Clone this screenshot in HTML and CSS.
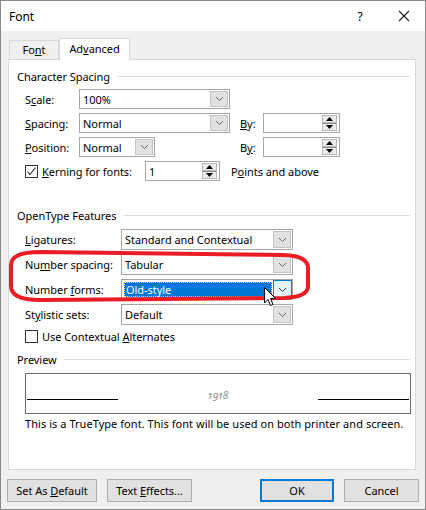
FILE: index.html
```html
<!DOCTYPE html>
<html>
<head>
<meta charset="utf-8">
<link rel="stylesheet" href="styles.css">
</head>
<body>
<div class="window">
  <div class="titlebar">
    <span class="title">Font</span>
    <span class="help">?</span>
    <span class="close"><svg width="12" height="12" viewBox="0 0 12 12"><path d="M1 1 L11 11 M11 1 L1 11" stroke="#1a1a1a" stroke-width="1.1" fill="none"/></svg></span>
  </div>
  <div class="client">
    <div class="tabs">
      <div class="tab">Fo<u>n</u>t</div>
      <div class="tab active">Ad<u>v</u>anced</div>
    </div>
    <div class="panel">
      <div class="group-title"><span>Character Spacing</span><i class="rule"></i></div>
      <div class="cs-rows">
        <div class="cs-row">
          <span class="lbl">S<u>c</u>ale:</span>
          <div class="combo w151"><span class="val">100%</span><span class="drop"><svg width="9" height="6" viewBox="0 0 9 6"><path d="M1 1 L4.5 4.5 L8 1" stroke="#666" fill="none"/></svg></span></div>
        </div>
        <div class="cs-row">
          <span class="lbl"><u>S</u>pacing:</span>
          <div class="combo w151"><span class="val">Normal</span><span class="drop"><svg width="9" height="6" viewBox="0 0 9 6"><path d="M1 1 L4.5 4.5 L8 1" stroke="#666" fill="none"/></svg></span></div>
          <span class="by"><u>B</u>y:</span>
          <div class="spin w77"><span class="val"></span><span class="arrows"><span class="up"><svg width="7" height="4" viewBox="0 0 7 4"><path d="M0 4 L3.5 0 L7 4 Z" fill="#000"/></svg></span><span class="dn"><svg width="7" height="4" viewBox="0 0 7 4"><path d="M0 0 L3.5 4 L7 0 Z" fill="#000"/></svg></span></span></div>
        </div>
        <div class="cs-row">
          <span class="lbl"><u>P</u>osition:</span>
          <div class="cell151"><div class="combo w76"><span class="val">Normal</span><span class="drop"><svg width="9" height="6" viewBox="0 0 9 6"><path d="M1 1 L4.5 4.5 L8 1" stroke="#666" fill="none"/></svg></span></div></div>
          <span class="by">B<u>y</u>:</span>
          <div class="spin w77"><span class="val"></span><span class="arrows"><span class="up"><svg width="7" height="4" viewBox="0 0 7 4"><path d="M0 4 L3.5 0 L7 4 Z" fill="#000"/></svg></span><span class="dn"><svg width="7" height="4" viewBox="0 0 7 4"><path d="M0 0 L3.5 4 L7 0 Z" fill="#000"/></svg></span></span></div>
        </div>
        <div class="cs-row kern">
          <span class="check-lbl"><span class="box checked"><svg width="11" height="11" viewBox="0 0 11 11"><path d="M1.5 5.5 L4 8.5 L9.5 1.5" stroke="#222" stroke-width="1.1" fill="none"/></svg></span><span><u>K</u>erning for fonts:</span></span>
          <div class="spin w75"><span class="val">1</span><span class="arrows"><span class="up"><svg width="7" height="4" viewBox="0 0 7 4"><path d="M0 4 L3.5 0 L7 4 Z" fill="#000"/></svg></span><span class="dn"><svg width="7" height="4" viewBox="0 0 7 4"><path d="M0 0 L3.5 4 L7 0 Z" fill="#000"/></svg></span></span></div>
          <span class="pts">P<u>o</u>ints and above</span>
        </div>
      </div>

      <div class="group-title ot"><span>OpenType Features</span><i class="rule"></i></div>
      <div class="ot-rows">
        <div class="ot-row">
          <span class="lbl2"><u>L</u>igatures:</span>
          <div class="combo w172"><span class="val">Standard and Contextual</span><span class="drop"><svg width="9" height="6" viewBox="0 0 9 6"><path d="M1 1 L4.5 4.5 L8 1" stroke="#666" fill="none"/></svg></span></div>
        </div>
        <div class="ot-row">
          <span class="lbl2">Nu<u>m</u>ber spacing:</span>
          <div class="combo w172"><span class="val">Tabular</span><span class="drop"><svg width="9" height="6" viewBox="0 0 9 6"><path d="M1 1 L4.5 4.5 L8 1" stroke="#666" fill="none"/></svg></span></div>
        </div>
        <div class="ot-row">
          <span class="lbl2">Number <u>f</u>orms:</span>
          <div class="combo w172 focused"><span class="val sel"><span class="seltext">Old-style</span></span><span class="drop"><svg width="9" height="6" viewBox="0 0 9 6"><path d="M1 1 L4.5 4.5 L8 1" stroke="#333" fill="none"/></svg></span></div>
        </div>
        <div class="ot-row">
          <span class="lbl2">St<u>y</u>listic sets:</span>
          <div class="combo w172"><span class="val">Default</span><span class="drop"><svg width="9" height="6" viewBox="0 0 9 6"><path d="M1 1 L4.5 4.5 L8 1" stroke="#666" fill="none"/></svg></span></div>
        </div>
      </div>
      <div class="check-row"><span class="box"></span><span>Use Contextual <u>A</u>lternates</span></div>

      <div class="group-title pv"><span>Preview</span><i class="rule"></i></div>
      <div class="preview">
        <i class="pline"></i>
        <span class="sample">1918</span>
        <i class="pline"></i>
      </div>
      <div class="desc">This is a TrueType font. This font will be used on both printer and screen.</div>
    </div>
    <div class="buttons">
      <button class="btn b1">Set As <u>D</u>efault</button>
      <button class="btn b2">Text <u>E</u>ffects...</button>
      <span class="spacer"></span>
      <button class="btn ok">OK</button>
      <button class="btn cancel">Cancel</button>
    </div>
  </div>

  <svg class="annot" width="426" height="510" viewBox="0 0 426 510">
    <path d="M40 252 L284 255 Q308 256 308 268 L308 287 Q307 297 284 298 L40 300 Q11 300 11 286 L11 265 Q11 252 40 252 Z" stroke="#ea1c26" stroke-width="4" fill="none" stroke-linejoin="round"/>
  </svg>
  <svg class="cursor" width="13" height="20" viewBox="0 0 13 20">
    <path d="M0.5 0.5 L0.5 16 L4 12.5 L6.5 18.5 L9 17.5 L6.5 11.5 L11.5 11.5 Z" fill="#fff" stroke="#000" stroke-width="1"/>
  </svg>
</div>
</body>
</html>
```
FILE: styles.css
```css
* { box-sizing: border-box; }
body {
  margin: 0;
  font-family: "Segoe UI", "Noto Sans", sans-serif;
  font-size: 11px;
  letter-spacing: -0.05px;
  color: #000;
  background: #fff;
}
u { text-decoration: underline; text-underline-offset: 1px; }
.window {
  width: 426px;
  height: 510px;
  border: 1px solid #8a8a8a;
  background: #f0f0f0;
  position: relative;
  overflow: hidden;
  display: flex;
  flex-direction: column;
}
.titlebar {
  height: 30px;
  background: #fff;
  display: flex;
  align-items: center;
  padding-left: 8px;
  flex: none;
}
.title { flex: 1; font-size: 12px; }
.help { width: 46px; text-align: center; font-size: 12px; }
.close { width: 42px; display: flex; justify-content: center; }

.client {
  flex: 1;
  padding: 7px 9px 0 7px;
  display: flex;
  flex-direction: column;
}
.tabs { display: flex; align-items: flex-end; height: 21px; margin-left: 1px; position: relative; z-index: 1; }
.tab {
  height: 19px;
  width: 50px;
  border: 1px solid #d9d9d9;
  border-bottom: none;
  background: #f0f0f0;
  text-align: center;
  line-height: 18px;
}
.tab.active {
  height: 22px;
  width: 71px;
  background: #fff;
  margin-bottom: -1px;
  line-height: 20px;
  border-right: 1px solid #d9d9d9;
}
.panel {
  width: 408px;
  height: 411px;
  border: 1px solid #d9d9d9;
  background: #fff;
  padding: 9px 5px 0 8px;
}
.group-title { display: flex; align-items: center; height: 16px; line-height: 16px; }
.group-title .rule { flex: 1; height: 1px; background: #dcdcdc; margin-left: 7px; margin-top: -1px; }
.cs-rows { display: flex; flex-direction: column; gap: 4px; margin-top: 4px; padding-left: 8px; }
.cs-row { display: flex; align-items: center; height: 20px; }
.lbl { width: 54px; }
.lbl2 { width: 96px; }
.combo {
  height: 100%;
  border: 1px solid #a6a6a6;
  background: #fff;
  display: flex;
  align-items: stretch;
}
.w151 { width: 151px; }
.w76 { width: 76px; }
.w172 { width: 172px; }
.cell151 { width: 151px; height: 100%; }
.combo .val { flex: 1; padding-left: 3px; display: flex; align-items: center; }
.combo .drop {
  width: 18px;
  margin: 1px;
  background: #e1e1e1;
  border: 1px solid #c4c4c4;
  display: flex;
  align-items: center;
  justify-content: center;
}
.combo.focused .drop { background: #e5f1fb; border-color: #0078d7; margin: 0; width: 19px; }
.combo .val.sel { padding: 2px 1px 2px 2px; }
.seltext {
  flex: 1;
  height: 100%;
  background: #0078d7;
  color: #fff;
  padding-left: 2px;
  display: flex;
  align-items: center;
  outline: 1px dotted #f3e27a;
  outline-offset: -1px;
}
.by { width: 33px; padding-left: 10px; }
.spin {
  height: 100%;
  border: 1px solid #a6a6a6;
  background: #fff;
  display: flex;
}
.w77 { width: 77px; }
.w75 { width: 75px; }
.spin .val { flex: 1; padding-left: 3px; display: flex; align-items: center; }
.arrows { width: 15px; margin: 1px 2px 1px 0; display: flex; flex-direction: column; }
.arrows span {
  flex: 1;
  background: #ececec;
  border: 1px solid #b9b9b9;
  display: flex;
  align-items: center;
  justify-content: center;
}
.arrows .dn { border-top: 1px solid #8c8c8c; }
.kern { height: 20px; }
.check-lbl { width: 120px; display: flex; align-items: center; gap: 4px; }
.box {
  width: 13px;
  height: 13px;
  border: 1px solid #333;
  background: #fff;
  display: flex;
  align-items: center;
  justify-content: center;
  flex: none;
}
.pts { margin-left: 11px; }

.group-title.ot { margin-top: 27px; }
.ot-rows { display: flex; flex-direction: column; gap: 4px; margin-top: 5px; padding-left: 8px; }
.ot-row { display: flex; align-items: center; height: 21px; }
.check-row { display: flex; align-items: center; gap: 4px; height: 16px; margin-top: 3px; padding-left: 8px; }

.group-title.pv { margin-top: 8px; }
.preview {
  margin: 5px 0 0 8px;
  width: 386px;
  height: 41px;
  border: 1px solid #6e6e6e;
  display: flex;
  align-items: flex-end;
  padding: 0 1px 13px 1px;
}
.pline { width: 91px; height: 1px; background: #000; flex: none; }
.sample {
  flex: 1;
  text-align: center;
  font-style: italic;
  font-size: 10px;
  color: #8a8a8a;
  line-height: 10px;
  margin-bottom: 0;
  font-variant-numeric: oldstyle-nums;
}
.desc { margin-top: 2px; padding-left: 8px; height: 16px; line-height: 16px; white-space: nowrap; letter-spacing: 0.05px; }

.buttons { display: flex; margin-top: 9px; margin-left: -1px; gap: 10px; }
.spacer { flex: 1; }
.btn {
  height: 23px;
  font-family: inherit;
  font-size: inherit;
  letter-spacing: inherit;
  background: #e1e1e1;
  border: 1px solid #adadad;
  color: #000;
  padding: 0;
}
.b1 { width: 90px; }
.b2 { width: 85px; }
.ok { width: 74px; border: 2px solid #0078d7; }
.cancel { width: 75px; margin-right: -3px; }

.annot { position: absolute; left: -1px; top: -1px; pointer-events: none; }
.cursor { position: absolute; left: 263px; top: 286px; pointer-events: none; }
```
